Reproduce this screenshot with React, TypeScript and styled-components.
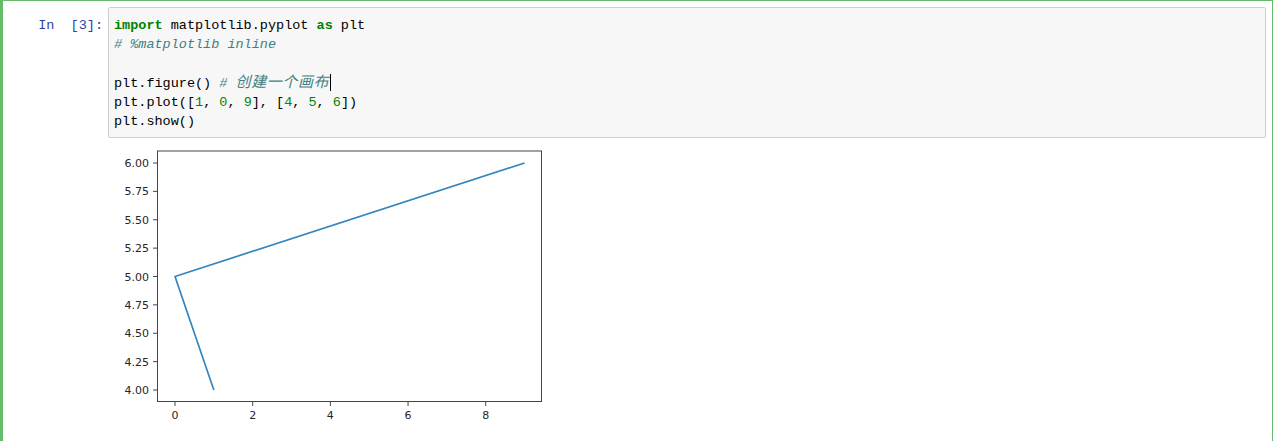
import styled, { createGlobalStyle } from 'styled-components'

const GlobalStyle = createGlobalStyle`
  body {
    margin: 0;
    background: #ffffff;
    font-family: "Liberation Sans", Arial, sans-serif;
  }
`

// axes box inside the figure svg
const AX = { left: 49.5, top: 10, right: 433.5, bottom: 260.5 }
const xPx = (v: number) => 67 + v * 38.84
const yPx = (v: number) => 249 - (v - 4) * 113.5

const xTicks = [0, 2, 4, 6, 8]
const yTicks = [4, 4.25, 4.5, 4.75, 5, 5.25, 5.5, 5.75, 6]
const points: [number, number][] = [
    [1, 4],
    [0, 5],
    [9, 6],
]

function Figure() {
    const d = points.map(([x, y], i) => `${i ? 'L' : 'M'}${xPx(x)},${yPx(y)}`).join(' ')
    return (
        <Chart width={450} height={300} viewBox="0 0 450 300">
            <path d={d} fill="none" stroke="#3484bd" strokeWidth={1.7} strokeLinejoin="round" />
            <rect
                x={AX.left}
                y={AX.top}
                width={AX.right - AX.left}
                height={AX.bottom - AX.top}
                fill="none"
                stroke="#444"
                strokeWidth={1}
            />
            {yTicks.map((t) => (
                <g key={t}>
                    <line x1={AX.left - 4.5} x2={AX.left} y1={yPx(t)} y2={yPx(t)} stroke="#444" />
                    <TickLabel x={AX.left - 8.5} y={yPx(t) + 4} textAnchor="end">
                        {t.toFixed(2)}
                    </TickLabel>
                </g>
            ))}
            {xTicks.map((t) => (
                <g key={t}>
                    <line x1={xPx(t)} x2={xPx(t)} y1={AX.bottom} y2={AX.bottom + 4.5} stroke="#444" />
                    <TickLabel x={xPx(t)} y={AX.bottom + 17} textAnchor="middle">
                        {t}
                    </TickLabel>
                </g>
            ))}
        </Chart>
    )
}

export default function App() {
    return (
        <>
            <GlobalStyle />
            <Cell>
                <InputRow>
                    <Prompt>In&nbsp;&nbsp;[3]:</Prompt>
                    <CodeBox>
                        <Code>
                            <Kw>import</Kw> matplotlib.pyplot <Kw>as</Kw> plt{'\n'}
                            <Comment># %matplotlib inline</Comment>{'\n'}
                            {'\n'}
                            plt.figure() <Comment># <Cjk>创建一个画布</Cjk></Comment>
                            <Cursor />{'\n'}
                            plt.plot([<Num>1</Num>, <Num>0</Num>, <Num>9</Num>], [<Num>4</Num>, <Num>5</Num>,{' '}
                            <Num>6</Num>]){'\n'}
                            plt.show()
                        </Code>
                    </CodeBox>
                </InputRow>
                <OutputRow>
                    <Figure />
                </OutputRow>
            </Cell>
        </>
    )
}

const Cell = styled.div`
  box-sizing: border-box;
  width: 1273px;
  min-height: 441px;
  border: 1px solid #66bb6a;
  border-left-width: 3px;
  border-bottom: none;
  padding: 6px 6px 0 0;
`

const InputRow = styled.div`
  display: flex;
  align-items: flex-start;
`

const Prompt = styled.div`
  flex: 0 0 105px;
  box-sizing: border-box;
  padding: 8.5px 5px 0 0;
  text-align: right;
  color: #303f9f;
  font-family: "Liberation Mono", monospace;
  font-size: 13.5px;
  line-height: 19px;
  white-space: nowrap;
`

const CodeBox = styled.div`
  flex: 1;
  background: #f7f7f7;
  border: 1px solid #cfcfcf;
  border-radius: 2px;
  padding: 7.5px 5px 6px;
`

const Code = styled.pre`
  margin: 0;
  color: #000;
  font-family: "Liberation Mono", monospace;
  font-size: 13.5px;
  line-height: 19px;
`

const Kw = styled.span`
  color: #008000;
  font-weight: bold;
`

const Num = styled.span`
  color: #008800;
`

const Comment = styled.span`
  color: #408080;
  font-style: italic;
`

const Cjk = styled.span`
  font-family: "Noto Sans CJK SC", sans-serif;
  font-size: 15px;
  line-height: 1;
  letter-spacing: 0.6px;
`

const Cursor = styled.span`
  display: inline-block;
  width: 1px;
  height: 17px;
  margin-left: 1px;
  background: #000;
  vertical-align: -4px;
`

const OutputRow = styled.div`
  display: flex;
  padding: 3.5px 0 0 105px;
`

const Chart = styled.svg`
  display: block;
`

const TickLabel = styled.text`
  font-family: "DejaVu Sans", sans-serif;
  font-size: 11px;
  fill: #262626;
`
